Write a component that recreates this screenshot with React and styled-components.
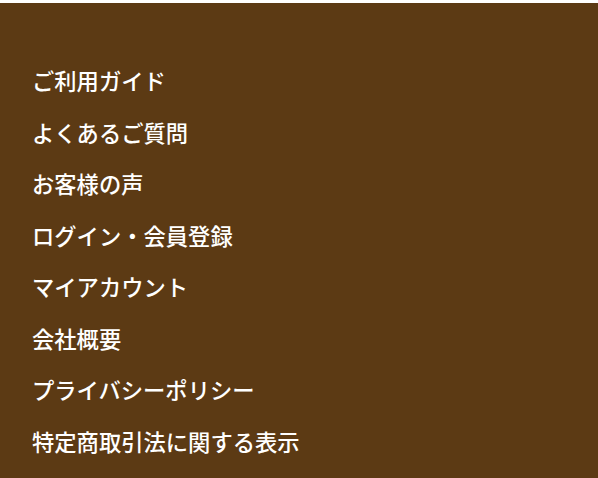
import React from "react";
import styled, { createGlobalStyle } from "styled-components";

const Global = createGlobalStyle`
  html, body {
    margin: 0;
    padding: 0;
    background: #ffffff;
  }
  body {
    font-family: "Noto Sans CJK JP", "Noto Sans", sans-serif;
  }
`;

const Footer = styled.footer`
  margin-top: 3px;
  height: 475px;
  background-color: #5c3a14;
  box-sizing: border-box;
  padding: 52px 0 0 32px;
`;

const Menu = styled.ul`
  list-style: none;
  margin: 0;
  padding: 0;
`;

const Item = styled.li`
  height: 51.57px;
  line-height: 51.57px;

  a {
    text-decoration: none;
    color: #ffffff;
    font-size: 22.3px;
    font-weight: 500;
    white-space: nowrap;
  }
`;

const links = [
  "ご利用ガイド",
  "よくあるご質問",
  "お客様の声",
  "ログイン・会員登録",
  "マイアカウント",
  "会社概要",
  "プライバシーポリシー",
  "特定商取引法に関する表示",
];

export default function App() {
  return (
    <>
      <Global />
      <Footer>
        <Menu>
          {links.map((label) => (
            <Item key={label}>
              <a href="#">{label}</a>
            </Item>
          ))}
        </Menu>
      </Footer>
    </>
  );
}
